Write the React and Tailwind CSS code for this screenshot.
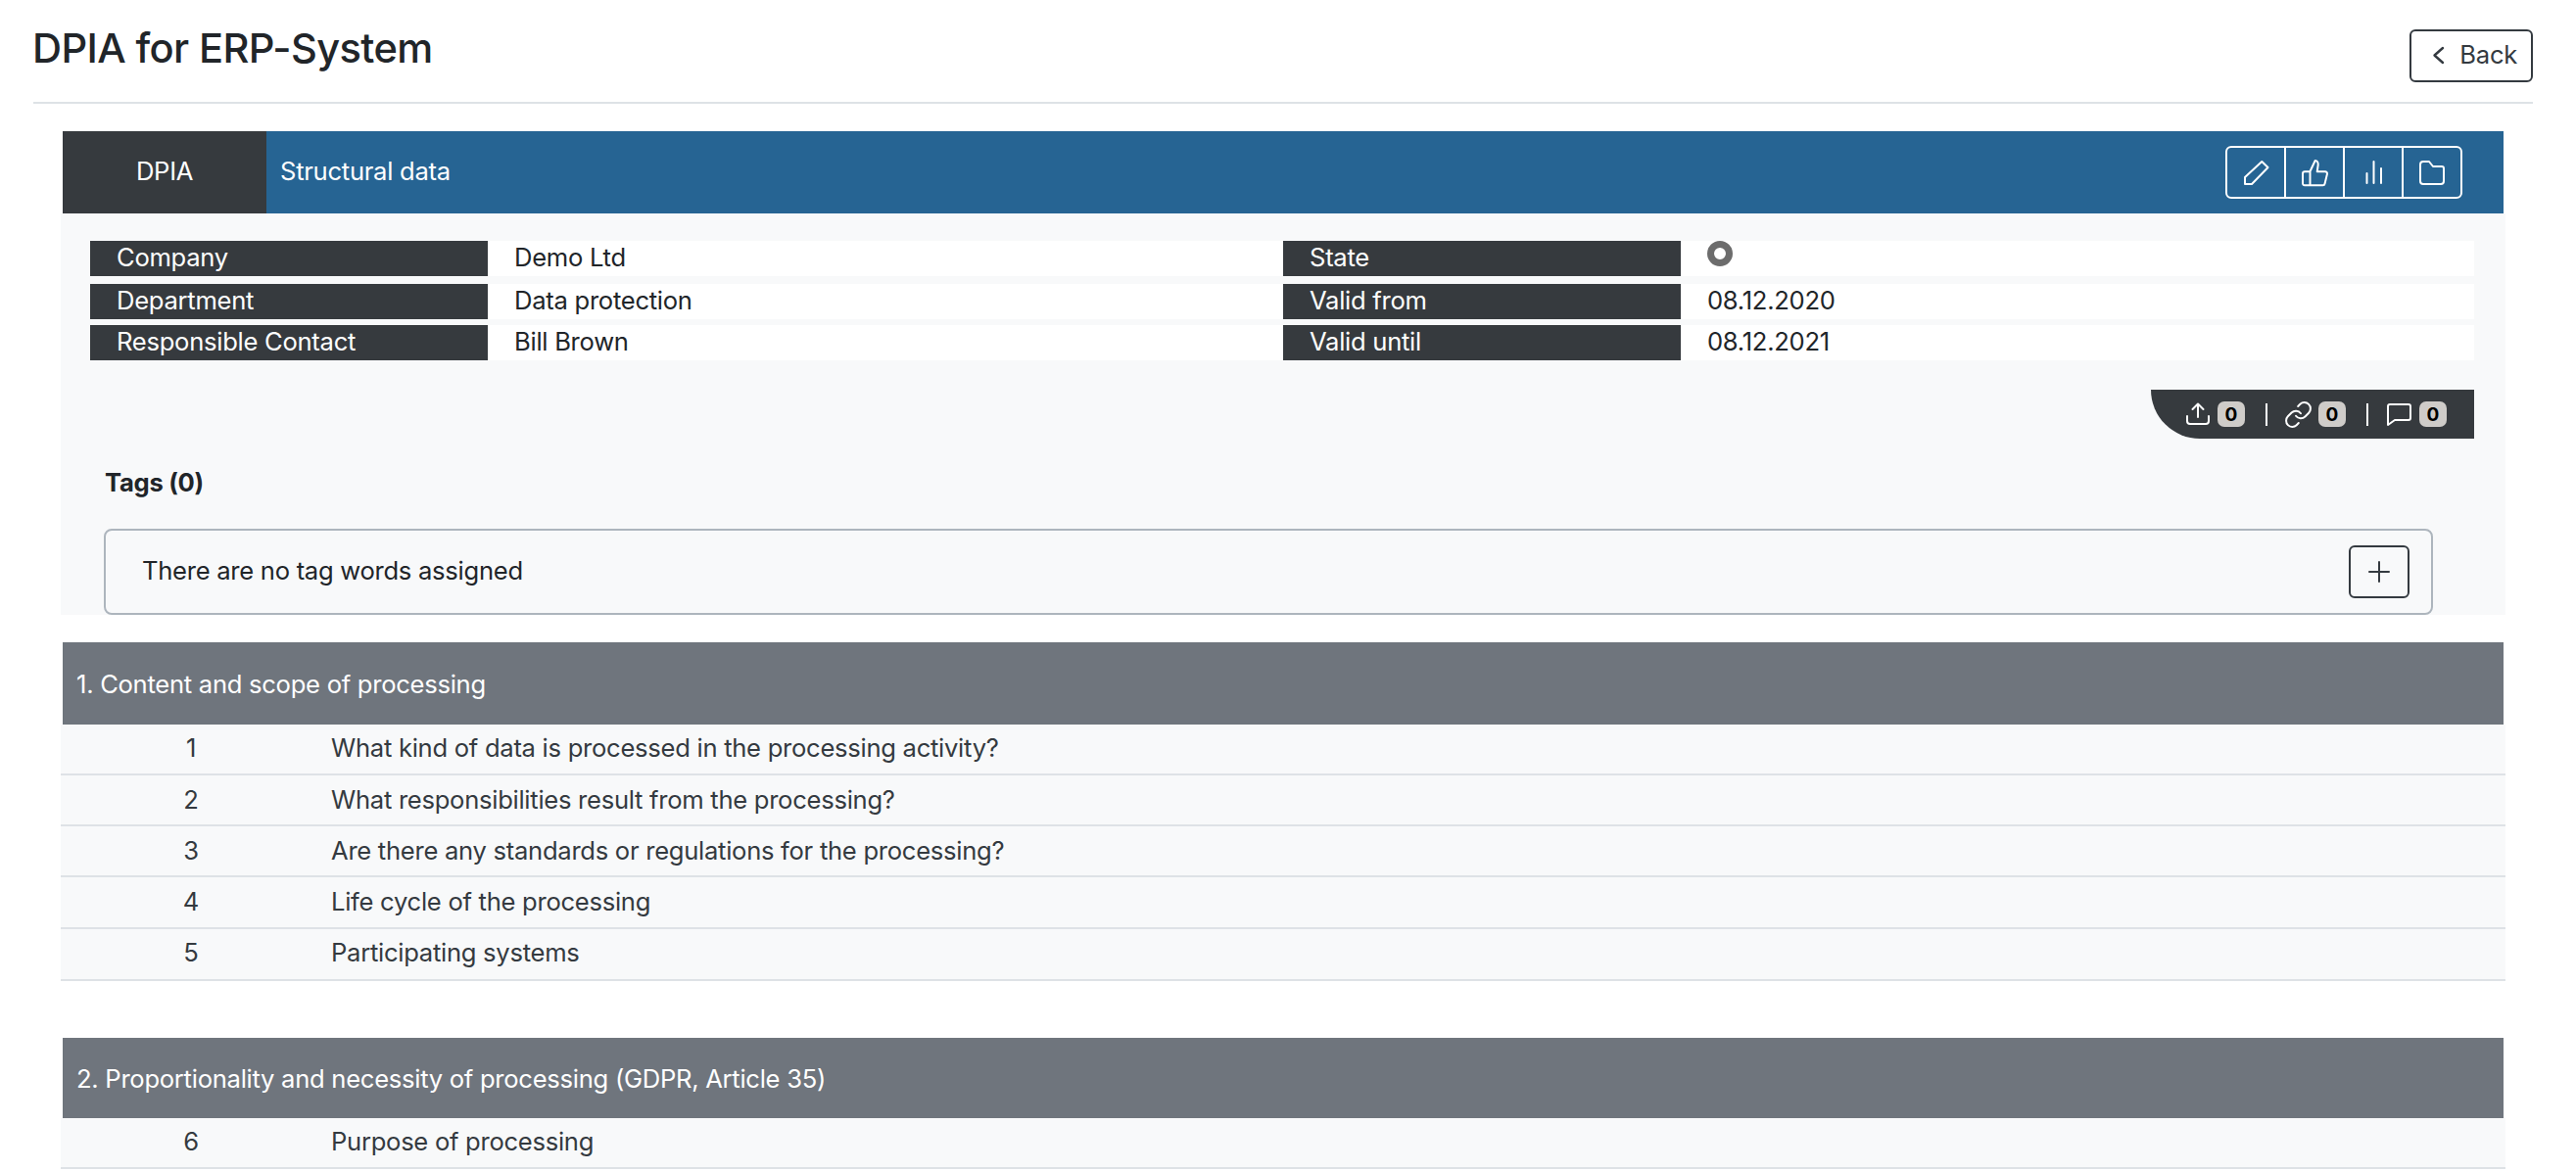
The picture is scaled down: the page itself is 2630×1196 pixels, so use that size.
const I = ({ children, className = "", vb = "0 0 24 24" }) => (
  <svg viewBox={vb} fill="none" stroke="currentColor" strokeLinecap="round" strokeLinejoin="round" className={`overflow-visible ${className}`}>{children}</svg>
);

const Pencil = () => (
  <I vb="0 0 25 25" className="w-[25px] h-[25px] stroke-[2]"><path d="M1 17 18.300 1 24.500 7 8 24H1z" /></I>
);
const Thumb = () => (
  <I vb="0 0 27 27" className="w-[27px] h-[27px] stroke-[2]"><path d="M8 12.300H3a2 2 0 0 0-2 2V24a2 2 0 0 0 2 2.300h18.500a2 2 0 0 0 2-1.600L26 14.500a2 2 0 0 0-2-2.200h-8.300l1-7c.2-2.500-1-4.300-3-4.300L8.500 12v14" /></I>
);
const Bars = () => (
  <I vb="0 0 17 24" className="w-[17px] h-[24px] stroke-[2]"><path d="M1.500 23V13M8.500 23V1M16 23V8" /></I>
);
const Folder = () => (
  <I vb="0 0 26 25" className="w-[26px] h-[25px] stroke-[2]"><path d="M1 4a3 3 0 0 1 3-3h6l4 5h9a2 2 0 0 1 2 2v13a3 3 0 0 1-3 3H4a3 3 0 0 1-3-3z" /></I>
);

const Badge = () => (
  <span className="w-[28px] h-[26px] rounded-[7px] bg-[#cfccc9] text-black font-bold text-[19px] tracking-normal flex items-center justify-center leading-none">0</span>
);

const Cell = ({ label, value, width, icon }) => (
  <div className={`flex h-[36px] bg-white ${width}`}>
    <div className="w-[406px] shrink-0 bg-[#363a3e] text-white pl-[27px] leading-[34px]">{label}</div>
    <div className="pl-[27px] leading-[34px] text-[#212529]">
      {icon ? <span className="block w-[26px] h-[26px] rounded-full border-[7px] border-[#6c6c6c] bg-white" /> : value}
    </div>
  </div>
);

const Row = ({ left, right, mb = "", icon }) => (
  <div className={`flex ${mb}`}>
    <Cell label={left[0]} value={left[1]} width="w-[1218px]" />
    <Cell label={right[0]} value={right[1]} width="flex-1" icon={icon} />
  </div>
);

const Section = ({ title, rows, className = "", head }) => (
  <section className={className}>
    <div className={`mx-[2px] bg-[#6f757d] text-white flex items-center pl-[14px] pt-[2px] ${head}`}>{title}</div>
    {rows.map(([n, t, h]) => (
      <div key={n} className={`flex items-center bg-[#f8f9fa] border-b-2 border-[#dee2e6] ${h}`}>
        <div className="w-[266px] text-center text-[#343a40]">{n}</div>
        <div className="pl-[10px] text-[#343a40]">{t}</div>
      </div>
    ))}
  </section>
);

export default function App() {
  return (
    <div className="h-[1196px] overflow-hidden bg-white pl-[34px] pr-[44px] text-[25.6px] tracking-[-0.28px] text-[#212529]" style={{ fontFamily: "Inter, sans-serif" }}>
      <header className="h-[106px] border-b-2 border-[#dee2e6] flex justify-between items-start">
        <h1 className="text-[41.6px] tracking-[-0.62px] font-medium leading-[50px] mt-[24px] -ml-[1px]">DPIA for ERP-System</h1>
        <button className="mt-[30px] w-[126px] h-[54px] border-2 border-[#343a40] rounded-[6px] flex items-center justify-end pr-[14px] pb-[2px] gap-[16px] text-[#343a40]">
          <I vb="0 0 11 17" className="w-[11px] h-[17px] stroke-[2.4]"><path d="M10 1 1.500 8.500 10 16" /></I>
          Back
        </button>
      </header>
      <main className="mx-[28px] mt-[28px]">
        <div className="mx-[2px] h-[84px] bg-[#266493] flex items-center text-white">
          <div className="w-[208px] h-full bg-[#363a3e] flex items-center justify-center pb-[1px] -translate-x-0">DPIA</div>
          <div className="pl-[14px] flex-1 pb-[2px]">Structural data</div>
          <div className="mr-[42px] flex h-[54px] w-[242px] border-2 border-white rounded-[6px] divide-x-2 divide-white">
            <span className="flex-1 flex items-center justify-center"><Pencil /></span>
            <span className="flex-1 flex items-center justify-center"><Thumb /></span>
            <span className="flex-1 flex items-center justify-center"><Bars /></span>
            <span className="flex-1 flex items-center justify-center"><Folder /></span>
          </div>
        </div>
        <div className="h-[410px] bg-[#f8f9fa] pl-[30px] pr-[32px] pt-[28px]">
          <Row left={["Company", "Demo Ltd"]} right={["State", ""]} icon mb="mb-2" />
          <Row left={["Department", "Data protection"]} right={["Valid from", "08.12.2020"]} mb="mb-1.5" />
          <Row left={["Responsible Contact", "Bill Brown"]} right={["Valid until", "08.12.2021"]} />
          <div className="flex justify-end mt-[30px]">
            <div className="w-[330px] h-[50px] bg-[#363a3e] rounded-bl-[50px] text-white flex items-center pl-[36px] gap-[8px]">
              <I vb="0 0 24 24" className="w-[24px] h-[24px] stroke-[2]"><path d="M1 14v5a3 3 0 0 0 3 3h16a3 3 0 0 0 3-3v-5M12 15V1.500M6.500 7 12 1.500 17.500 7" /></I>
              <Badge />
              <span className="w-[2px] h-[23px] bg-white ml-[13px] mr-[11px]" />
              <I vb="2 2 20 20" className="w-[25px] h-[25px] stroke-[1.6]"><path d="M10 13a5 5 0 0 0 7.540.540l3-3a5 5 0 0 0-7.070-7.070l-1.720 1.710M14 11a5 5 0 0 0-7.540-.540l-3 3a5 5 0 0 0 7.070 7.070l1.710-1.710" /></I>
              <Badge />
              <span className="w-[2px] h-[23px] bg-white ml-[13px] mr-[11px]" />
              <I vb="0 0 25 23" className="w-[25px] h-[23px] stroke-[2]"><path d="M1 22V3a2 2 0 0 1 2-2h19a2 2 0 0 1 2 2v12a2 2 0 0 1-2 2H8z" /></I>
              <Badge />
            </div>
          </div>
          <div className="font-bold pl-[15px] mt-[29px] leading-[32px]">Tags (0)</div>
          <div className="mt-[31px] w-[2378px] ml-[14px] h-[88px] border-2 border-[#adb5bd] rounded-[8px] flex items-center justify-between pl-[37px] pr-[22px]">
            <span className="-mt-[1px]">There are no tag words assigned</span>
            <button className="w-[62px] h-[54px] border-2 border-[#343a40] rounded-[6px] flex items-center justify-center text-[#343a40]">
              <I vb="0 0 22 22" className="w-[22px] h-[22px] stroke-[2]"><path d="M11 1v20M1 11h20" /></I>
            </button>
          </div>
        </div>
        <Section className="mt-[28px]" head="h-[84px]" title="1. Content and scope of processing" rows={[
          [1, "What kind of data is processed in the processing activity?", "h-[52px] pb-[2px]"],
          [2, "What responsibilities result from the processing?", "h-[52px]"],
          [3, "Are there any standards or regulations for the processing?", "h-[52px]"],
          [4, "Life cycle of the processing", "h-[53px]"],
          [5, "Participating systems", "h-[53px] pb-[2px]"],
        ]} />
        <Section className="mt-[58px]" head="h-[82px]" title="2. Proportionality and necessity of processing (GDPR, Article 35)" rows={[
          [6, "Purpose of processing", "h-[52px] pb-[2px]"],
        ]} />
      </main>
    </div>
  );
}
